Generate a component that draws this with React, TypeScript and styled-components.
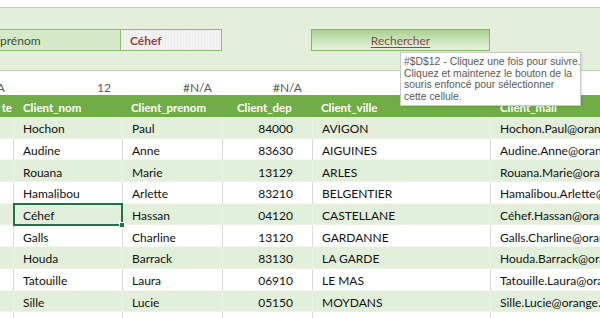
import React from "react";
import styled, { createGlobalStyle } from "styled-components";

const Global = createGlobalStyle`
  html, body { margin: 0; padding: 0; background: #ffffff; }
  body { font-family: Lato, "Liberation Sans", sans-serif; }
`;

const COLS = "13px 109px 100px 90px 178px 1fr";

const Page = styled.div`
  position: relative;
  width: 600px;
  height: 318px;
  overflow: hidden;
  background: #fff;
  padding-top: 7px;
  box-sizing: border-box;
`;

const Panel = styled.div`
  height: 64px;
  box-sizing: border-box;
  background: #e3efdb;
  border-top: 1.5px solid #b9d4a6;
  border-bottom: 1.5px solid #b9d4a6;
  padding-top: 20.5px;
  display: flex;
  align-items: flex-start;
`;

const LabelBox = styled.div`
  width: 121px;
  height: 22px;
  box-sizing: border-box;
  background: #d5e8c8;
  border: 1px solid #8fbb70;
  border-left: none;
  display: flex;
  align-items: center;
  font-size: 12px;
  color: #3a5230;
  padding-top: 1px;
`;

const InputBox = styled.div`
  width: 101px;
  height: 22px;
  box-sizing: border-box;
  background: repeating-linear-gradient(90deg, #f3f3f3 0px, #f3f3f3 2px, #ececec 2px, #ececec 3px);
  border: 1px solid #8fbb70;
  border-left: none;
  display: flex;
  align-items: center;
  padding-left: 9px;
  padding-top: 1px;
  font-size: 12px;
  font-weight: 700;
  color: #9b3f3c;
`;

const SearchButton = styled.div`
  margin-left: 89px;
  width: 179px;
  height: 22px;
  box-sizing: border-box;
  background: linear-gradient(180deg, #a9d08d 0%, #c8e2b7 45%, #e6f2de 100%);
  border: 1px solid #86b566;
  display: flex;
  align-items: center;
  justify-content: center;
  padding-top: 1px;
  font-size: 12px;
  color: #8b4a4a;
  text-decoration: underline;
  text-underline-offset: 2px;
`;

const GridRow = styled.div<{ $h: number; $bg?: string }>`
  display: grid;
  grid-template-columns: ${COLS};
  height: ${(p) => p.$h}px;
  background: ${(p) => p.$bg || "#ffffff"};
`;

const FormulaCell = styled.div<{ $pr: number; $clip?: boolean }>`
  display: flex;
  align-items: flex-end;
  justify-content: flex-end;
  overflow: ${(p) => (p.$clip ? "hidden" : "visible")};
  white-space: nowrap;
  font-size: 12px;
  line-height: 14px;
  color: #595959;
  padding-right: ${(p) => p.$pr}px;
`;

const HeadCell = styled.div<{ $pl: number; $clip?: boolean }>`
  display: flex;
  align-items: center;
  justify-content: ${(p) => (p.$clip ? "flex-end" : "flex-start")};
  overflow: hidden;
  white-space: nowrap;
  padding-left: ${(p) => p.$pl}px;
  padding-right: ${(p) => (p.$clip ? 1 : 0)}px;
  padding-top: 2px;
  font-size: 11.5px;
  font-weight: 700;
  color: #ffffff;
`;

const Cell = styled.div<{ $band: boolean; $right?: boolean; $first?: boolean; $selected?: boolean }>`
  position: relative;
  display: flex;
  align-items: center;
  justify-content: ${(p) => (p.$right ? "flex-end" : "flex-start")};
  overflow: ${(p) => (p.$selected ? "visible" : "hidden")};
  z-index: ${(p) => (p.$selected ? 1 : 0)};
  white-space: nowrap;
  padding: 2px ${(p) => (p.$right ? "19px" : "0")} 0 ${(p) => (p.$right ? "0" : "9px")};
  font-size: 12px;
  color: #111111;
  border-left: ${(p) =>
    p.$first ? "none" : `1px solid ${p.$band ? "rgba(255,255,255,0.35)" : "#dcdcdc"}`};
  box-shadow: inset 0 -1px 0 ${(p) => (p.$band ? "#eaf3e4" : "#f4f8f1")};
`;

const Selection = styled.div`
  position: absolute;
  left: -1px;
  top: -1px;
  right: -1px;
  bottom: -1px;
  border: 2px solid #217346;
  pointer-events: none;
`;

const Handle = styled.div`
  position: absolute;
  right: -4px;
  bottom: -4px;
  width: 6px;
  height: 6px;
  background: #217346;
  border: 1px solid #fff;
  box-sizing: border-box;
`;

const Tooltip = styled.div`
  position: absolute;
  left: 400px;
  top: 52px;
  width: 181px;
  height: 54px;
  box-sizing: border-box;
  background: #ffffff;
  border: 1px solid #c8c8c8;
  box-shadow: 1px 1px 2px rgba(0, 0, 0, 0.12);
  padding: 3px 0 0 3px;
  font-family: "Liberation Sans", sans-serif;
  font-size: 10.4px;
  line-height: 11.7px;
  color: #5a5a5a;
  white-space: nowrap;
  z-index: 2;
`;

type Row = [string, string, string, string, string];
const rows: Row[] = [
  ["Hochon", "Paul", "84000", "AVIGON", "Hochon.Paul@orange.fr"],
  ["Audine", "Anne", "83630", "AIGUINES", "Audine.Anne@orange.fr"],
  ["Rouana", "Marie", "13129", "ARLES", "Rouana.Marie@orange.fr"],
  ["Hamalibou", "Arlette", "83210", "BELGENTIER", "Hamalibou.Arlette@orange.fr"],
  ["Céhef", "Hassan", "04120", "CASTELLANE", "Céhef.Hassan@orange.fr"],
  ["Galls", "Charline", "13120", "GARDANNE", "Galls.Charline@orange.fr"],
  ["Houda", "Barrack", "83130", "LA GARDE", "Houda.Barrack@orange.fr"],
  ["Tatouille", "Laura", "06910", "LE MAS", "Tatouille.Laura@orange.fr"],
  ["Sille", "Lucie", "05150", "MOYDANS", "Sille.Lucie@orange.fr"],
  ["", "", "", "", ""],
];

export default function App() {
  return (
    <>
      <Global />
      <Page>
        <Panel>
          <LabelBox>prénom</LabelBox>
          <InputBox>Céhef</InputBox>
          <SearchButton>Rechercher</SearchButton>
        </Panel>
        <GridRow $h={24}>
          <FormulaCell $pr={8} $clip>
            #N/A
          </FormulaCell>
          <FormulaCell $pr={11}>12</FormulaCell>
          <FormulaCell $pr={10}>#N/A</FormulaCell>
          <FormulaCell $pr={10}>#N/A</FormulaCell>
          <FormulaCell $pr={0} />
          <FormulaCell $pr={0} />
        </GridRow>
        <GridRow $h={22} $bg="#70ad47">
          <HeadCell $pl={0} $clip>
            te
          </HeadCell>
          <HeadCell $pl={10}>Client_nom</HeadCell>
          <HeadCell $pl={9}>Client_prenom</HeadCell>
          <HeadCell $pl={15}>Client_dep</HeadCell>
          <HeadCell $pl={9}>Client_ville</HeadCell>
          <HeadCell $pl={10}>Client_mail</HeadCell>
        </GridRow>
        {rows.map((r, i) => {
          const band = i % 2 === 0;
          return (
            <GridRow key={i} $h={21.7} $bg={band ? "#e2efda" : "#ffffff"}>
              <Cell $band={band} $first />
              <Cell $band={band} $selected={i === 4}>
                {r[0]}
                {i === 4 && (
                  <Selection>
                    <Handle />
                  </Selection>
                )}
              </Cell>
              <Cell $band={band}>{r[1]}</Cell>
              <Cell $band={band} $right>
                {r[2]}
              </Cell>
              <Cell $band={band}>{r[3]}</Cell>
              <Cell $band={band}>{r[4]}</Cell>
            </GridRow>
          );
        })}
        <Tooltip>
          #$D$12 - Cliquez une fois pour suivre.
          <br />
          Cliquez et maintenez le bouton de la
          <br />
          souris enfoncé pour sélectionner
          <br />
          cette cellule.
        </Tooltip>
      </Page>
    </>
  );
}
